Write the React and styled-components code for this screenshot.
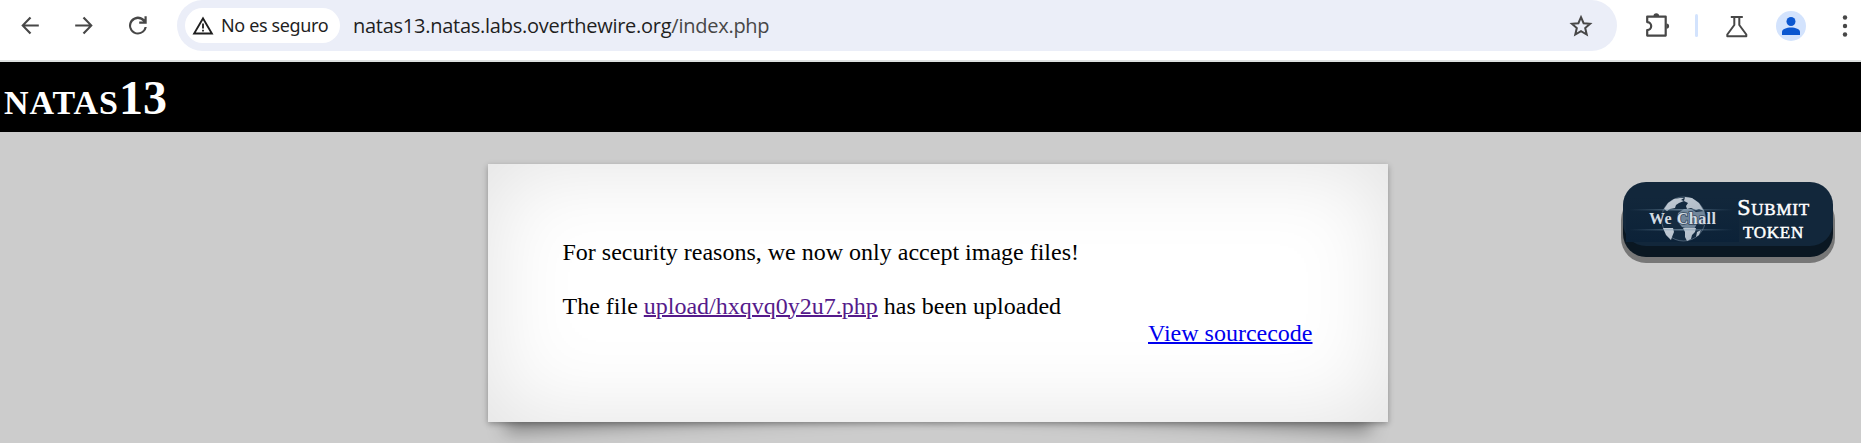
import React from "react";
import styled, { createGlobalStyle, css } from "styled-components";

const GlobalStyle = createGlobalStyle`
  * { box-sizing: border-box; }
  html { overflow: hidden; }
  body {
    margin: 0;
    background: #ccc;
    font-family: "Liberation Serif", "Times New Roman", serif;
    font-size: 24px;
    line-height: 27px;
    color: #000;
  }
`;

const Window = styled.div`
  display: flex;
  flex-direction: column;
  height: 443px;
  overflow: hidden;
`;

const Toolbar = styled.header`
  display: flex;
  align-items: flex-start;
  height: 62px;
  background: #fff;
  border-bottom: 2px solid #dee1e0;
  font-family: "Noto Sans", "Open Sans", sans-serif;
`;

const NavButtons = styled.nav`
  display: flex;
  gap: 30px;
  width: 177px;
  padding: 13px 0 0 18px;
`;

const Icon = styled.svg`
  display: block;
  flex: none;
  width: ${(p) => p.$size || 24}px;
  height: ${(p) => p.$size || 24}px;
  fill: ${(p) => p.$color || "#474747"};
`;

const AddressBar = styled.div`
  display: flex;
  align-items: center;
  width: 1440px;
  height: 51px;
  padding: 0 24px 0 8px;
  border-radius: 26px;
  background: #ebeef8;
`;

const SecurityChip = styled.div`
  display: flex;
  align-items: center;
  gap: 7px;
  width: 155px;
  height: 35px;
  padding-left: 7px;
  border-radius: 18px;
  background: #fff;
  color: #1f1f1f;
  font-size: 18px;
  letter-spacing: -0.36px;
  white-space: nowrap;
`;

const Url = styled.div`
  flex: 1;
  padding-left: 13px;
  color: #1f1f1f;
  font-family: "Open Sans", sans-serif;
  font-size: 20px;
  letter-spacing: -0.26px;
  white-space: nowrap;
`;

const UrlPath = styled.span`
  color: #474747;
`;

const Actions = styled.div`
  display: flex;
  align-items: center;
  height: 51px;
`;

const Extensions = styled.div`
  margin-left: 26px;
`;

const Divider = styled.div`
  width: 3px;
  height: 23px;
  margin-left: 24px;
  border-radius: 2px;
  background: #d3e3fd;
`;

const Labs = styled.div`
  margin-left: 27px;
`;

const Avatar = styled.div`
  display: grid;
  place-items: center;
  width: 30px;
  height: 30px;
  margin-left: 27px;
  border-radius: 50%;
  background: #d3e3fd;
`;

const Menu = styled.div`
  margin-left: 27px;
`;

const Title = styled.h1`
  flex: none;
  height: 70px;
  margin: 0;
  padding: 8px 0 0 4px;
  background: #000;
  color: #fff;
  font-size: 48px;
  line-height: 55px;
  font-variant: small-caps;
`;

const TitleWord = styled.span`
  letter-spacing: 0.95px;
`;

const Page = styled.main`
  display: flex;
  align-items: flex-start;
  padding: 32px 28px 0 488px;
`;

const curl = css`
  content: "";
  position: absolute;
  z-index: -1;
  bottom: 22.5px;
  width: 50%;
  max-width: 450px;
  height: 20%;
  box-shadow: 0 21px 18px rgba(0, 0, 0, 0.34);
`;

const Paper = styled.section`
  position: relative;
  z-index: 0;
  width: 900px;
  height: 258px;
  &::before {
    ${curl}
    left: 15px;
    transform: rotate(-3deg);
  }
  &::after {
    ${curl}
    right: 15px;
    transform: rotate(3deg);
  }
`;

const Sheet = styled.div`
  display: flex;
  flex-direction: column;
  height: 100%;
  padding: 75px 75.5px 75px 74.5px;
  background: #fff;
  box-shadow: 0 1.5px 6px rgba(0, 0, 0, 0.3), 0 0 90px rgba(0, 0, 0, 0.12) inset;
`;

const Message = styled.p`
  margin: 0 0 ${(p) => p.$after || 0}px;
`;

const Link = styled.a`
  align-self: flex-end;
  color: ${(p) => (p.$visited ? "#551a8b" : "#0000ee")};
  text-decoration: underline;
  text-decoration-thickness: 2px;
`;

const TokenButton = styled.button`
  display: flex;
  align-items: center;
  width: 210px;
  height: 64px;
  margin: 18px 0 0 auto;
  padding: 0 24px 0 0;
  border: 0;
  border-radius: 23px;
  background: #12273b;
  box-shadow: 0 11px 0 #0a1722, 0 15px 0 2px #777;
  color: #fff;
  font-family: "Liberation Serif", serif;
  font-size: 24px;
  font-variant: small-caps;
  line-height: 23px;
`;

const Logo = styled.svg`
  flex: none;
  width: 115.5px;
  height: 64px;
`;

const ButtonLabel = styled.span`
  flex: none;
  width: 70px;
  padding-top: 9px;
  display: flex;
  flex-direction: column;
  align-items: center;
  letter-spacing: 0.75px;
  white-space: nowrap;
  -webkit-text-stroke: 0.5px #fff;
`;

function WeChallLogo() {
  return (
    <Logo viewBox="0 0 115.5 64">
      <defs>
        <linearGradient id="beam">
          <stop offset="0" stopColor="#6585a0" stopOpacity="0" />
          <stop offset=".5" stopColor="#8fa9bd" stopOpacity=".6" />
          <stop offset="1" stopColor="#6585a0" stopOpacity="0" />
        </linearGradient>
        <linearGradient id="band" x1="0" y1="0" x2="0" y2="1">
          <stop offset="0" stopColor="#12273b" />
          <stop offset="1" stopColor="#0c2238" />
        </linearGradient>
        <linearGradient id="land" x1="0" y1="0" x2="1" y2="1">
          <stop offset="0" stopColor="#c2cbd5" />
          <stop offset="1" stopColor="#aebac6" />
        </linearGradient>
      </defs>
      <rect x="3" y="15" width="113" height="45" fill="url(#band)" />
      <circle cx="60.5" cy="37" r="22" fill="#142b41" stroke="#788c9f" strokeOpacity=".7" strokeWidth=".8" />
      <path fill="url(#land)" d="M41 27l4-6 6-4 6-1 4 0-3 2 3 1-5 2-3 2-1 3-5 1-3 2zM62 15l7 1 7 5 5 8-5-2-3 1-5-2-4 1-1-3 2-3-4-2z" />
      <path fill="#71869a" d="M55 31l6-4 7 0 5 3 8-1 2 8-2 6-7-1-3 5-6 0-6-2-5-6z" />
      <path fill="url(#land)" d="M40 46l10 0 1 4-2 5-1 3-5-5zM60 46l13 0-1 4-3 3-1 4-4 2-2-4 0-5zM74 50l4-2-2 5-3 2z" />
      <rect x="6" y="27" width="104" height="1.5" fill="url(#beam)" />
      <rect x="6" y="47" width="104" height="1.5" fill="url(#beam)" />
      <text x="26" y="42.3" fill="#d3dbe3" stroke="#12273b" strokeOpacity=".7" strokeWidth="1.5" paintOrder="stroke" fontFamily="Liberation Serif, serif" fontSize="16" fontWeight="bold" textLength="67" style={{ fontVariant: "normal" }}>We Chall</text>
    </Logo>
  );
}

export default function App() {
  return (
    <>
      <GlobalStyle />
      <Window>
        <Toolbar>
          <NavButtons>
            <Icon viewBox="0 0 24 24"><path d="M20.8 11.4v2.2H7.1l6.2 6.1-1.6 1.5-8.4-8.7 8.4-8.7 1.6 1.5-6.2 6.1z" /></Icon>
            <Icon viewBox="0 0 24 24"><path d="M3.2 11.4v2.2h13.7l-6.2 6.1 1.6 1.5 8.4-8.7-8.4-8.7-1.6 1.5 6.2 6.1z" /></Icon>
            <Icon viewBox="0 0 24 24"><path d="M12 21.5a9 9 0 1 1 6.5-15.2V3.2h2.2v7.5h-7.5V8.5h4A6.8 6.8 0 1 0 18.6 14h2.2A9 9 0 0 1 12 21.5z" /></Icon>
          </NavButtons>
          <AddressBar>
            <SecurityChip>
              <Icon $size={22} $color="#1f1f1f" viewBox="0 0 22 22"><path d="M.5 19.5L11 1.5l10.5 18zM3.8 17.6h14.4L11 5.3zM10.1 8.5h1.8v5h-1.8zM10.1 14.7h1.8v1.9h-1.8z" fillRule="evenodd" /></Icon>
              No es seguro
            </SecurityChip>
            <Url>natas13.natas.labs.overthewire.org<UrlPath>/index.php</UrlPath></Url>
            <Icon viewBox="0 0 24 24"><path fill="none" stroke="#474747" strokeWidth="2" d="M12 3.2l2.6 6 6.5.6-4.9 4.3 1.5 6.4L12 17.1l-5.7 3.4 1.5-6.4-4.9-4.3 6.5-.6z" /></Icon>
          </AddressBar>
          <Actions>
            <Extensions>
              <Icon $size={28} viewBox="0 0 28 28"><path d="M10.5 4a2.8 2.8 0 0 1 5.6 0z" /><path d="M23.5 11.5a2.6 2.6 0 0 1 0 5.2z" /><path fill="none" stroke="#474747" strokeWidth="2.2" strokeLinejoin="round" d="M4.2 4.6h18.5v19H4.2v-5.5a4 4 0 0 0 0-8z" /></Icon>
            </Extensions>
            <Divider />
            <Labs>
              <Icon viewBox="0 0 24 24"><path fill="none" stroke="#474747" strokeWidth="2" strokeLinejoin="round" d="M5.8 3h12M9.3 3v8L2.3 20.5v1.7h19v-1.7L14.3 11V3" /></Icon>
            </Labs>
            <Avatar><Icon $size={20} $color="#0b57d0" viewBox="0 0 20 20"><circle cx="10" cy="5.5" r="4.5" /><path d="M1 19v-3c0-6 18-6 18 0v3z" /></Icon></Avatar>
            <Menu><Icon viewBox="0 0 24 24"><circle cx="12" cy="3.5" r="2.2" /><circle cx="12" cy="12" r="2.2" /><circle cx="12" cy="20.5" r="2.2" /></Icon></Menu>
          </Actions>
        </Toolbar>
        <Title><TitleWord>natas</TitleWord>13</Title>
        <Page>
          <Paper>
            <Sheet>
              <Message $after={27}>For security reasons, we now only accept image files!</Message>
              <Message>The file <Link $visited>upload/hxqvq0y2u7.php</Link> has been uploaded</Message>
              <Link>View sourcecode</Link>
            </Sheet>
          </Paper>
          <TokenButton>
            <WeChallLogo />
            <ButtonLabel><span>Submit</span><span>token</span></ButtonLabel>
          </TokenButton>
        </Page>
      </Window>
    </>
  );
}
